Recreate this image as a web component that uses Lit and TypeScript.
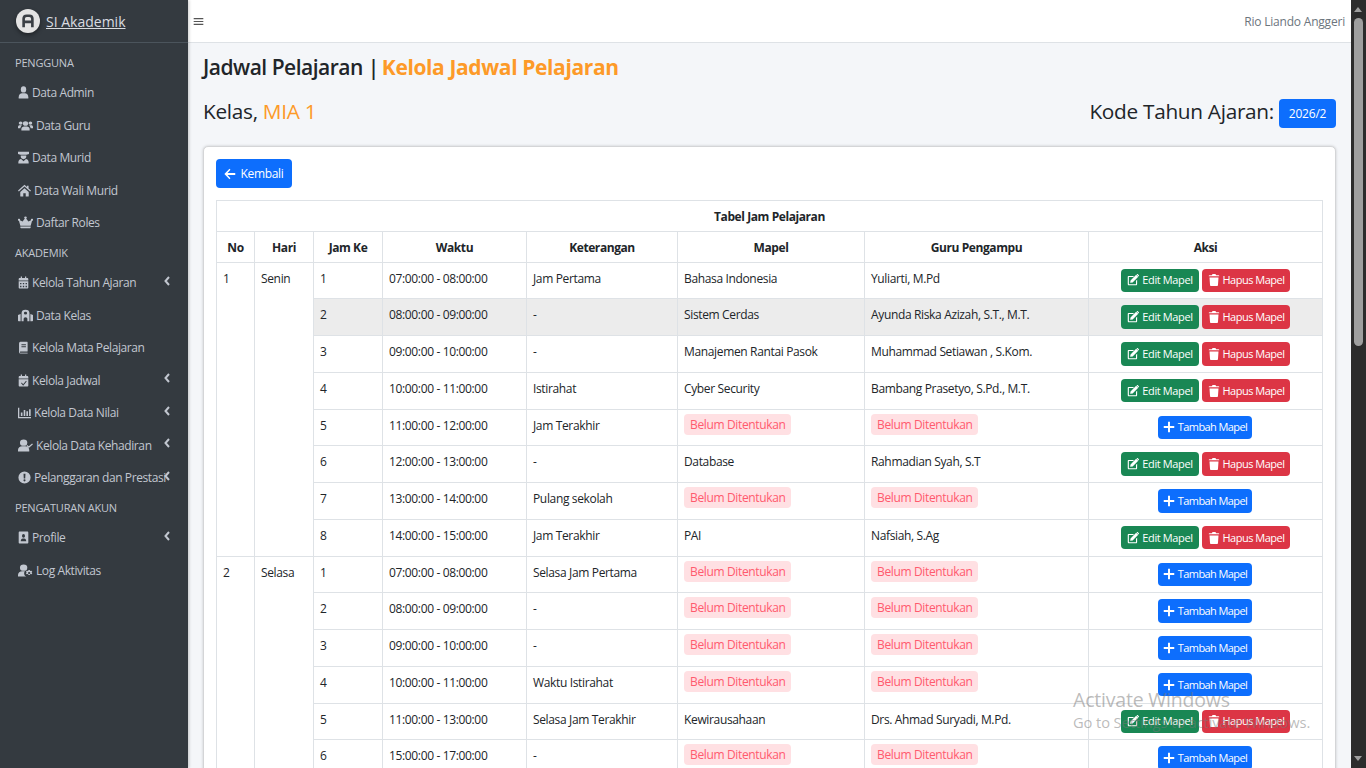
import { LitElement, css, html, svg } from 'lit';
import { customElement } from 'lit/decorators.js';

const icons: Record<string, unknown> = {
  user: svg`<circle cx="8" cy="4.2" r="3.9"/><path d="M1 15.500v-1.600C1 10.900 3.300 9 6 9h4c2.700 0 5 1.900 5 4.900v1.600z"/>`,
  users: svg`<circle cx="8" cy="5.500" r="2.800"/><path d="M3.600 14v-1.700c0-1.700 1.300-3 3-3h2.800c1.700 0 3 1.300 3 3V14z"/><circle cx="2.800" cy="5" r="2"/><circle cx="13.200" cy="5" r="2"/><path d="M0 11.500v-1.800C0 8.500.8 7.700 1.800 7.700h1.500c.3 0 .5.100.8.200-.9.700-1.400 2-1.600 3.600zM16 11.500v-1.800c0-1.200-.8-2-1.800-2h-1.500c-.3 0-.5.100-.8.200.9.700 1.400 2 1.600 3.600z"/>`,
  grad: svg`<path d="M0 1h16v2.600l-3.700.9H3.700L0 3.600z"/><path d="M4 5.400h8v1.200a4 3.400 0 0 1-8 0z"/><path d="M.5 15.500v-1.700c0-2.300 1.800-3.700 4-3.900L8 12.500l3.500-2.600c2.200.2 4 1.600 4 3.900v1.700z"/>`,
  home: svg`<path d="M8 1 0 8l1 1.300L8 3.200l7 6.100L16 8l-3-2.600V2h-2v1.700zM2.800 9.800v5c0 .4.300.7.700.7h3v-4h3v4h3c.4 0 .7-.3.700-.7v-5L8 5.200z"/>`,
  crown: svg`<path d="M2.500 13h11v1.300c0 .4-.3.700-.8.700H3.300c-.5 0-.8-.3-.8-.7zM13.500 12h-11L1 5.800a1.200 1.200 0 1 1 1.100-.7l2.800 1.800L7.300 3a1.300 1.300 0 1 1 1.400 0l2.400 3.900 2.800-1.800a1.200 1.200 0 1 1 1.100.7z"/>`,
  calendar: svg`<path d="M4 .500h1.800v2h4.400v-2H12v2h1.500c.8 0 1.500.7 1.500 1.500v1.500H1V4c0-.8.7-1.500 1.500-1.500H4zM1 6.500h14V14c0 .8-.7 1.500-1.500 1.500h-11C1.700 15.500 1 14.800 1 14zM3 8.500v1.700h2V8.500zm4 0v1.700h2V8.500zm4 0v1.700h2V8.500zM3 12v1.700h2V12zm4 0v1.700h2V12zm4 0v1.700h2V12z"/>`,
  school: svg`<path d="M8 1a4.200 4.200 0 0 0-4.200 4.200V15H6v-3a2 2 0 0 1 4 0v3h2.200V5.200A4.200 4.200 0 0 0 8 1zm0 2.500a1.700 1.700 0 1 1 0 3.400 1.700 1.700 0 0 1 0-3.400zM0 7.500 2.800 6v9H.7a.7.7 0 0 1-.7-.7zM16 7.500 13.200 6v9h2.100a.7.7 0 0 0 .7-.7z"/>`,
  book: svg`<path d="M3.500 1h9.700c.5 0 .8.300.8.800v10.400c0 .4-.3.800-.8.800H3.500a.7.700 0 0 0 0 1.500H14v1H3.500a2 2 0 0 1-2-2V3a2 2 0 0 1 2-2zM5 4v1.200h6.500V4zm0 2.600v1.200h6.500V6.600z"/>`,
  calcheck: svg`<path d="M4 .500h1.800v2h4.400v-2H12v2h1.500c.8 0 1.500.7 1.500 1.500v1.500H1V4c0-.8.7-1.500 1.500-1.500H4zM1 6.500h14V14c0 .8-.7 1.500-1.500 1.500h-11C1.700 15.500 1 14.800 1 14zm10.700 1.900-4.200 4.100-2.100-2-.9.900 3 3 5.100-5.100z"/>`,
  chart: svg`<path d="M0 2h1.600v11.400H16V15H0zM3.500 8h2v4.300h-2zM7 5h2v7.300H7zM10.300 6.500h2v5.800h-2zM13.600 4h2v8.300h-2z"/>`,
  usercheck: svg`<circle cx="6" cy="4.500" r="3.900"/><path d="M0 15.500v-2C0 11 2 9 4.500 9h3c2.500 0 4.500 2 4.500 4.500v2z"/><path d="m15 5.500 1 1-4.500 4.500-2.500-2.500 1-1 1.500 1.500z"/>`,
  alert: svg`<path d="M8 .500a7.500 7.500 0 1 0 0 15 7.500 7.500 0 0 0 0-15zM6.800 3.500h2.400L8.900 9.300H7.100zM8 10.200a1.300 1.300 0 1 1 0 2.600 1.300 1.300 0 0 1 0-2.600z"/>`,
  idcard: svg`<path d="M2.500.500h11c.8 0 1.500.7 1.500 1.500v12c0 .8-.7 1.500-1.500 1.500h-11c-.8 0-1.500-.7-1.500-1.500V2C1 1.200 1.700.500 2.500.500zM8 3.800a2.200 2.200 0 1 0 0 4.400 2.200 2.200 0 0 0 0-4.400zM4 12.500h8c0-1.800-1.200-3.300-3-3.300H7c-1.800 0-3 1.500-3 3.300z"/>`,
  usercog: svg`<circle cx="6" cy="4.500" r="3.900"/><path d="M0 15.500v-2C0 11 2 9 4.500 9h2.800a4.500 4.500 0 0 0 1.500 6.500z"/><path d="m12.500 7.500.5 1.200 1.300-.3.900 1-.7 1.100.7 1.100-.9 1-1.300-.3-.5 1.200h-1.300l-.5-1.200-1.300.3-.9-1 .7-1.100-.7-1.100.9-1 1.300.3.500-1.200zm-.6 2.200a1.300 1.300 0 1 0 0 2.600 1.300 1.300 0 0 0 0-2.600z"/>`,
  edit: svg`<path d="M2.300 2.500h7.200L8 4H2.500v9.500H12V9l1.500-1.500v6.200c0 .7-.6 1.300-1.300 1.300H2.300c-.7 0-1.300-.6-1.300-1.300V3.800c0-.7.6-1.300 1.300-1.300z"/><path d="m12.200 1 2.800 2.800-7.500 7.500-3.300.5.500-3.300zM13.200.200c.4-.3.900-.3 1.300 0l1.300 1.300c.3.400.3.900 0 1.300l-.4.400-2.600-2.600z"/>`,
  trash: svg`<path d="M5.500.800C5.700.300 6.100 0 6.600 0h2.800c.5 0 .9.300 1.100.800l.4.700H14c.6 0 1 .4 1 1v.5H1v-.5c0-.6.400-1 1-1h3.100zM2 4.500h12l-.7 10.100c0 .8-.7 1.400-1.500 1.400H4.200c-.8 0-1.500-.6-1.500-1.400z"/>`,
  plus: svg`<path d="M6.700 1h2.600v5.700H15v2.600H9.300V15H6.700V9.300H1V6.700h5.700z"/>`,
  back: svg`<path d="M7.300 1 8.600 2.300 4.700 6.500H15v2.800H4.700l3.900 4.200L7.300 15 .5 8z"/>`,
  bars: svg`<path d="M1 3h14v1.600H1zM1 7.200h14v1.600H1zM1 11.400h14V13H1z"/>`,
};

const icon = (name: string, cls = '') =>
  html`<svg class="ico ${cls}" viewBox="0 0 16 16" preserveAspectRatio="none" fill="currentColor">${icons[name]}</svg>`;

type NavEntry =
  | { header: string }
  | { label: string; icon: string; cls?: string; more?: boolean };

const NAV: NavEntry[] = [
  { header: 'PENGGUNA' },
  { label: 'Data Admin', icon: 'user' },
  { label: 'Data Guru', icon: 'users', cls: 'wide' },
  { label: 'Data Murid', icon: 'grad' },
  { label: 'Data Wali Murid', icon: 'home', cls: 'mid' },
  { label: 'Daftar Roles', icon: 'crown', cls: 'wide' },
  { header: 'AKADEMIK' },
  { label: 'Kelola Tahun Ajaran', icon: 'calendar', more: true },
  { label: 'Data Kelas', icon: 'school', cls: 'wide' },
  { label: 'Kelola Mata Pelajaran', icon: 'book' },
  { label: 'Kelola Jadwal', icon: 'calcheck', more: true },
  { label: 'Kelola Data Nilai', icon: 'chart', cls: 'mid', more: true },
  { label: 'Kelola Data Kehadiran', icon: 'usercheck', cls: 'wide', more: true },
  { label: 'Pelanggaran dan Prestasi', icon: 'alert', cls: 'mid', more: true },
  { header: 'PENGATURAN AKUN' },
  { label: 'Profile', icon: 'idcard', more: true },
  { label: 'Log Aktivitas', icon: 'usercog', cls: 'wide' },
];

interface Row {
  jam: string;
  waktu: string;
  ket: string;
  mapel?: string;
  guru?: string;
}

const DAYS: { no: string; hari: string; rows: Row[] }[] = [
  {
    no: '1',
    hari: 'Senin',
    rows: [
      { jam: '1', waktu: '07:00:00 - 08:00:00', ket: 'Jam Pertama', mapel: 'Bahasa Indonesia', guru: 'Yuliarti, M.Pd' },
      { jam: '2', waktu: '08:00:00 - 09:00:00', ket: '-', mapel: 'Sistem Cerdas', guru: 'Ayunda Riska Azizah, S.T., M.T.' },
      { jam: '3', waktu: '09:00:00 - 10:00:00', ket: '-', mapel: 'Manajemen Rantai Pasok', guru: 'Muhammad Setiawan , S.Kom.' },
      { jam: '4', waktu: '10:00:00 - 11:00:00', ket: 'Istirahat', mapel: 'Cyber Security', guru: 'Bambang Prasetyo, S.Pd., M.T.' },
      { jam: '5', waktu: '11:00:00 - 12:00:00', ket: 'Jam Terakhir' },
      { jam: '6', waktu: '12:00:00 - 13:00:00', ket: '-', mapel: 'Database', guru: 'Rahmadian Syah, S.T' },
      { jam: '7', waktu: '13:00:00 - 14:00:00', ket: 'Pulang sekolah' },
      { jam: '8', waktu: '14:00:00 - 15:00:00', ket: 'Jam Terakhir', mapel: 'PAI', guru: 'Nafsiah, S.Ag' },
    ],
  },
  {
    no: '2',
    hari: 'Selasa',
    rows: [
      { jam: '1', waktu: '07:00:00 - 08:00:00', ket: 'Selasa Jam Pertama' },
      { jam: '2', waktu: '08:00:00 - 09:00:00', ket: '-' },
      { jam: '3', waktu: '09:00:00 - 10:00:00', ket: '-' },
      { jam: '4', waktu: '10:00:00 - 11:00:00', ket: 'Waktu Istirahat' },
      { jam: '5', waktu: '11:00:00 - 13:00:00', ket: 'Selasa Jam Terakhir', mapel: 'Kewirausahaan', guru: 'Drs. Ahmad Suryadi, M.Pd.' },
      { jam: '6', waktu: '15:00:00 - 17:00:00', ket: '-' },
    ],
  },
];

@customElement('app-root')
export class AppRoot extends LitElement {
  static override styles = css`
    :host {
      display: flex;
      height: 768px;
      overflow: hidden;
      position: relative;
      font-family: 'Open Sans', 'Noto Sans', sans-serif;
      font-size: 12px;
      color: #212529;
      background: #f4f6f9;
    }

    .ico {
      width: 1em;
      height: 1em;
      flex: none;
      display: inline-block;
    }

    .sidebar {
      width: 188px;
      flex: none;
      background: #343a40;
      color: #c2c7d0;
      box-shadow: 1px 0 3px rgba(0, 0, 0, 0.2);
      z-index: 1;
    }

    .brand {
      height: 42px;
      border-bottom: 1px solid #4b545c;
      display: flex;
      align-items: center;
      gap: 6px;
      padding-left: 16px;
      font-size: 14px;
      color: #d9dce0;
      text-decoration: underline;
    }

    .logo {
      width: 24px;
      height: 24px;
      border-radius: 50%;
      background: #e4e4e4;
      display: flex;
      align-items: center;
      justify-content: center;
      color: #3a3f45;
      box-shadow: 0 2px 4px rgba(0, 0, 0, 0.4);
    }

    .logo svg {
      width: 14px;
      height: 14px;
    }

    .nav {
      padding-top: 6px;
    }

    .head {
      height: 27.5px;
      padding-left: 15px;
      display: flex;
      align-items: center;
      font-size: 11px;
      letter-spacing: -0.2px;
    }

    .item {
      height: 32.5px;
      padding-left: 18px;
      display: flex;
      align-items: center;
      gap: 3px;
      position: relative;
      white-space: nowrap;
      letter-spacing: -0.4px;
    }

    .item .ico {
      width: 11px;
      height: 13px;
    }

    .item .wide {
      width: 15px;
    }

    .item .mid {
      width: 13px;
    }

    .chev {
      position: absolute;
      left: 164px;
      top: 9px;
      width: 6px;
      height: 10px;
      color: #c2c7d0;
    }

    .main {
      flex: 1;
      min-width: 0;
      display: flex;
      flex-direction: column;
    }

    .top {
      height: 42px;
      flex: none;
      background: #fff;
      border-bottom: 1px solid #dee2e6;
      display: flex;
      align-items: center;
      justify-content: space-between;
      padding: 0 6px 0 5px;
      color: #6c757d;
      font-size: 12px;
      letter-spacing: -0.2px;
    }

    .top .ico {
      width: 11px;
      height: 11px;
      color: #555;
    }

    .content {
      padding: 0 15px;
    }

    h1 {
      margin: 0;
      padding-top: 9px;
      height: 38px;
      font-size: 21px;
      font-weight: 600;
      line-height: 30px;
      letter-spacing: -0.5px;
      color: #212529;
      box-sizing: content-box;
    }

    h1 b {
      color: #fd9a28;
      font-weight: 700;
      letter-spacing: -0.38px;
      margin-left: -2px;
    }

    .sub {
      display: flex;
      justify-content: space-between;
      align-items: center;
      height: 44px;
      padding-bottom: 2px;
      box-sizing: border-box;
      font-size: 20.8px;
      font-weight: 500;
      letter-spacing: -0.3px;
    }

    .sub em {
      font-style: normal;
      color: #fd9a28;
    }

    .kode {
      display: flex;
      align-items: center;
      gap: 5px;
    }

    .badge {
      width: 57px;
      height: 29px;
      border-radius: 4px;
      background: #0d6efd;
      color: #fff;
      font-size: 12px;
      font-weight: 400;
      letter-spacing: -0.2px;
      display: flex;
      align-items: center;
      justify-content: center;
      padding-top: 1px;
      box-sizing: border-box;
      margin-top: 4px;
    }

    .card {
      margin-top: 12px;
      background: #fff;
      border-radius: 5px;
      border: 1px solid #d4d5d7;
      box-shadow: 0 0 3px rgba(0, 0, 0, 0.18);
      padding: 12px 12px;
    }

    .btn {
      display: inline-flex;
      align-items: center;
      justify-content: center;
      gap: 3px;
      border-radius: 4px;
      color: #fff;
      font-size: 11px;
      letter-spacing: -0.38px;
      white-space: nowrap;
      box-sizing: border-box;
    }

    .back {
      width: 76px;
      height: 29px;
      background: #0d6efd;
      font-size: 12px;
      letter-spacing: -0.3px;
      margin-bottom: 11.5px;
      display: flex;
      gap: 4px;
    }

    .back .ico {
      width: 11px;
      height: 11px;
    }

    table {
      width: 1107px;
      border-collapse: collapse;
      table-layout: fixed;
      letter-spacing: -0.35px;
    }

    .c-no { width: 38px; }
    .c-hari { width: 59px; }
    .c-jam { width: 69px; }
    .c-waktu { width: 144px; }
    .c-ket { width: 151px; }
    .c-mapel { width: 187px; }
    .c-guru { width: 224px; }

    th,
    td {
      border: 1px solid #dee2e6;
      padding: 0 6px;
      text-align: left;
      vertical-align: top;
    }

    th {
      height: 29px;
      text-align: center;
      vertical-align: middle;
      font-weight: 700;
      font-size: 12px;
      letter-spacing: -0.42px;
      padding: 1px 4px 0;
    }

    td {
      line-height: 18px;
      padding-top: 7px;
    }

    tr.data {
      height: 36.75px;
    }

    tr.hover td:not(.span) {
      background: #ececec;
    }

    td.act {
      text-align: center;
      padding: 6px 0 0;
      line-height: 0;
    }

    td.miss {
      padding-top: 4px;
    }

    .acts {
      display: flex;
      justify-content: center;
      gap: 3px;
    }

    .acts .btn {
      height: 23.5px;
    }

    .edit {
      width: 78px;
      background: #198754;
    }

    .del {
      width: 88px;
      background: #dc3545;
      letter-spacing: -0.5px;
    }

    .add {
      width: 94px;
      margin-right: 1px;
      background: #0d6efd;
      letter-spacing: -0.6px;
    }

    .btn .ico {
      width: 12px;
      height: 12px;
    }

    .none {
      display: inline-block;
      background: #ffe0e3;
      color: #ff5a6e;
      border-radius: 4px;
      padding: 2px 5px 1px 6px;
      line-height: 18px;
    }

    .bar {
      width: 15px;
      flex: none;
      background: #2c2c2c;
      position: relative;
      display: flex;
      flex-direction: column;
      align-items: center;
    }

    .thumb {
      margin-top: 18px;
      width: 9px;
      height: 328px;
      border-radius: 5px;
      background: #9f9f9f;
    }

    .up,
    .down {
      position: absolute;
      left: 3px;
      width: 0;
      height: 0;
      border-left: 4.5px solid transparent;
      border-right: 4.5px solid transparent;
    }

    .up {
      top: 7px;
      border-bottom: 5px solid #9f9f9f;
    }

    .down {
      bottom: 7px;
      border-top: 5px solid #9f9f9f;
    }

    .activate {
      position: absolute;
      left: 1073px;
      top: 688px;
      color: rgba(120, 120, 120, 0.5);
      font-size: 14.7px;
      line-height: 20px;
      letter-spacing: -0.1px;
      white-space: nowrap;
      z-index: 2;
    }

    .activate div:first-child {
      font-size: 19.5px;
      line-height: 24px;
      letter-spacing: -0.2px;
    }
  `;

  private renderNav() {
    return NAV.map((n) =>
      'header' in n
        ? html`<div class="head">${n.header}</div>`
        : html`<div class="item">
            ${icon(n.icon, n.cls ?? '')}<span>${n.label}</span>
            ${n.more
              ? html`<svg class="chev" viewBox="0 0 6 10" fill="none" stroke="currentColor" stroke-width="2"><path d="M5 1 1.500 5 5 9"/></svg>`
              : ''}
          </div>`
    );
  }

  private renderActions(r: Row) {
    if (r.mapel) {
      return html`<div class="acts">
        <span class="btn edit">${icon('edit')}Edit Mapel</span>
        <span class="btn del">${icon('trash')}Hapus Mapel</span>
      </div>`;
    }
    return html`<div class="acts"><span class="btn add">${icon('plus')}Tambah Mapel</span></div>`;
  }

  private renderRows() {
    return DAYS.map((d) =>
      d.rows.map(
        (r, i) => html`<tr class="data ${d.no === '1' && r.jam === '2' ? 'hover' : ''}">
          ${i === 0
            ? html`<td class="span" rowspan=${d.rows.length}>${d.no}</td>
                <td class="span" rowspan=${d.rows.length}>${d.hari}</td>`
            : ''}
          <td>${r.jam}</td>
          <td>${r.waktu}</td>
          <td>${r.ket}</td>
          ${r.mapel
            ? html`<td>${r.mapel}</td><td>${r.guru}</td>`
            : html`<td class="miss"><span class="none">Belum Ditentukan</span></td>
                <td class="miss"><span class="none">Belum Ditentukan</span></td>`}
          <td class="act">${this.renderActions(r)}</td>
        </tr>`
      )
    );
  }

  override render() {
    return html`
      <aside class="sidebar">
        <div class="brand">
          <span class="logo">
            <svg viewBox="0 0 16 16" fill="none" stroke="currentColor" stroke-width="3"><path d="M3 15V5.500C3 3 4.500 2 6.500 2h3C11.500 2 13 3 13 5.500V15M3 9h10"/></svg>
          </span>
          SI Akademik
        </div>
        <nav class="nav">${this.renderNav()}</nav>
      </aside>
      <div class="main">
        <header class="top">${icon('bars')}<span>Rio Liando Anggeri</span></header>
        <div class="content">
          <h1>Jadwal Pelajaran | <b>Kelola Jadwal Pelajaran</b></h1>
          <div class="sub">
            <span>Kelas, <em>MIA 1</em></span>
            <span class="kode">Kode Tahun Ajaran: <span class="badge">2026/2</span></span>
          </div>
          <section class="card">
            <span class="btn back">${icon('back')}Kembali</span>
            <table>
              <colgroup>
                <col class="c-no" /><col class="c-hari" /><col class="c-jam" /><col class="c-waktu" />
                <col class="c-ket" /><col class="c-mapel" /><col class="c-guru" /><col />
              </colgroup>
              <thead>
                <tr><th colspan="8">Tabel Jam Pelajaran</th></tr>
                <tr>
                  <th>No</th><th>Hari</th><th>Jam Ke</th><th>Waktu</th>
                  <th>Keterangan</th><th>Mapel</th><th>Guru Pengampu</th><th>Aksi</th>
                </tr>
              </thead>
              <tbody>${this.renderRows()}</tbody>
            </table>
          </section>
        </div>
      </div>
      <div class="bar"><span class="up"></span><div class="thumb"></div><span class="down"></span></div>
      <div class="activate">
        <div>Activate Windows</div>
        <div>Go to Settings to activate Windows.</div>
      </div>
    `;
  }
}
